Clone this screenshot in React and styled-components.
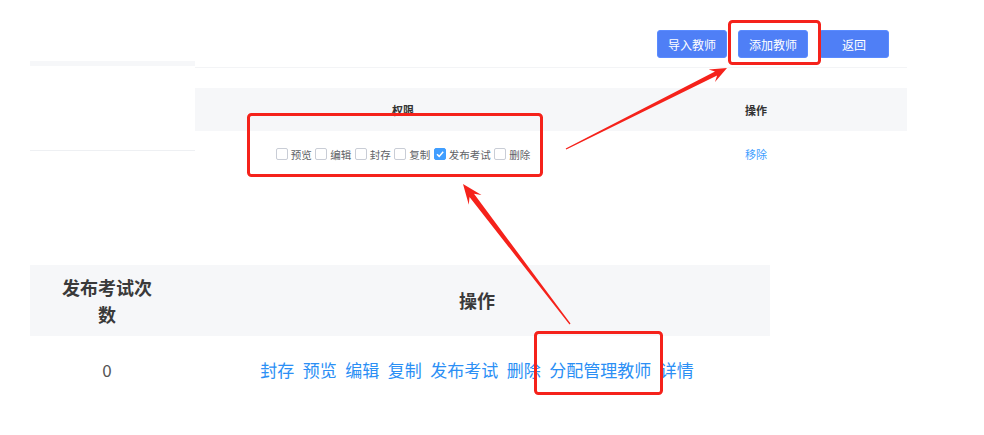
import React from "react";
import styled, { createGlobalStyle } from "styled-components";

const GlobalStyle = createGlobalStyle`
  body {
    margin: 0;
    background: #ffffff;
    font-family: "Noto Sans CJK SC", "Noto Sans", sans-serif;
  }
`;

const permissions = [
  { label: "预览", checked: false },
  { label: "编辑", checked: false },
  { label: "封存", checked: false },
  { label: "复制", checked: false },
  { label: "发布考试", checked: true },
  { label: "删除", checked: false },
];

const actions = ["封存", "预览", "编辑", "复制", "发布考试", "删除", "分配管理教师", "详情"];

function arrowPoints(x1, y1, x2, y2, head, headW, neckW, tailW) {
  const dx = x2 - x1;
  const dy = y2 - y1;
  const len = Math.sqrt(dx * dx + dy * dy);
  const ux = dx / len;
  const uy = dy / len;
  const nx = -uy;
  const ny = ux;
  const bx = x2 - ux * head;
  const by = y2 - uy * head;
  const kx = x2 - ux * head * 0.72;
  const ky = y2 - uy * head * 0.72;
  const pts = [
    [x1 + nx * tailW, y1 + ny * tailW],
    [kx + nx * neckW, ky + ny * neckW],
    [bx + nx * headW, by + ny * headW],
    [x2, y2],
    [bx - nx * headW, by - ny * headW],
    [kx - nx * neckW, ky - ny * neckW],
    [x1 - nx * tailW, y1 - ny * tailW],
  ];
  return pts.map((p) => p[0].toFixed(1) + "," + p[1].toFixed(1)).join(" ");
}

function CheckMark() {
  return (
    <svg width="10" height="10" viewBox="0 0 10 10">
      <path d="M2 5.2 L4.2 7.4 L8.2 2.8" fill="none" stroke="#fff" strokeWidth="1.5" />
    </svg>
  );
}

function App() {
  return (
    <Page>
      <GlobalStyle />
      <Toolbar>
        <Button>导入教师</Button>
        <Button>添加教师</Button>
        <Button>返回</Button>
      </Toolbar>

      <TopSection>
        <SidePane />
        <MainPane>
          <TopHeader>
            <span>权限</span>
            <span>操作</span>
          </TopHeader>
          <TopRow>
            <CheckGroup>
              {permissions.map((p) => (
                <CheckItem key={p.label}>
                  <Box $checked={p.checked}>{p.checked && <CheckMark />}</Box>
                  <span>{p.label}</span>
                </CheckItem>
              ))}
            </CheckGroup>
            <SmallLink>移除</SmallLink>
          </TopRow>
        </MainPane>
      </TopSection>

      <BottomTable>
        <BottomHeader>
          <HeadCell $narrow>发布考试次数</HeadCell>
          <HeadCell>操作</HeadCell>
        </BottomHeader>
        <BottomRow>
          <CountCell>0</CountCell>
          <LinkCell>
            {actions.map((a) => (
              <BigLink key={a}>{a}</BigLink>
            ))}
          </LinkCell>
        </BottomRow>
      </BottomTable>

      <Annotations width="984" height="435" viewBox="0 0 984 435">
        <rect x="729.5" y="21.5" width="90" height="42" rx="3" fill="none" stroke="#f5221b" strokeWidth="3" />
        <rect x="248.5" y="114.5" width="293" height="61" rx="3" fill="none" stroke="#f5221b" strokeWidth="3" />
        <rect x="535.5" y="332.5" width="126" height="61" rx="3" fill="none" stroke="#f5221b" strokeWidth="3" />
        <polygon points={arrowPoints(566, 149, 727, 68, 17, 7, 2.4, 0.6)} fill="#f5221b" />
        <polygon points={arrowPoints(570, 324, 463, 184, 20, 8, 2.8, 0.6)} fill="#f5221b" />
      </Annotations>
    </Page>
  );
}

const Page = styled.div`
  position: relative;
  width: 984px;
  height: 435px;
  overflow: hidden;
  background: #ffffff;
`;

const Toolbar = styled.div`
  display: flex;
  justify-content: flex-end;
  gap: 11px;
  padding: 30px 95px 3px 0;
`;

const Button = styled.button`
  width: 70px;
  height: 28px;
  border: 1px solid #5a8bff;
  border-radius: 3px;
  background: #4f7ff6;
  color: #ffffff;
  font-family: inherit;
  font-size: 12px;
  padding: 0;
`;

const TopSection = styled.div`
  display: flex;
  align-items: flex-start;
  margin-left: 30px;
`;

const SidePane = styled.div`
  width: 165px;
  height: 84px;
  border-top: 5px solid #f6f7f9;
  border-bottom: 1px solid #eef0f3;
`;

const MainPane = styled.div`
  width: 712px;
  margin-top: 6px;
  padding-top: 20px;
  border-top: 1px solid #f3f4f6;
`;

const TopHeader = styled.div`
  display: grid;
  grid-template-columns: 416px 290px;
  align-items: center;
  justify-items: center;
  height: 43px;
  padding-right: 6px;
  background: #f6f7f9;
  color: #333333;
  font-size: 11px;
  font-weight: 700;
`;

const TopRow = styled.div`
  display: grid;
  grid-template-columns: 416px 290px;
  align-items: center;
  justify-items: center;
  height: 46px;
`;

const CheckGroup = styled.div`
  display: flex;
  align-items: center;
  gap: 3.5px;
  font-size: 10.5px;
  color: #606266;
`;

const CheckItem = styled.label`
  display: flex;
  align-items: center;
  gap: 3px;
`;

const Box = styled.span`
  display: flex;
  align-items: center;
  justify-content: center;
  width: 12px;
  height: 12px;
  box-sizing: border-box;
  border-radius: 2px;
  border: 1px solid ${(p) => (p.$checked ? "#409eff" : "#c9cdd6")};
  background: ${(p) => (p.$checked ? "#409eff" : "#ffffff")};
`;

const SmallLink = styled.span`
  font-size: 11px;
  color: #409eff;
`;

const BottomTable = styled.div`
  width: 740px;
  margin: 88px 0 0 30px;
`;

const BottomHeader = styled.div`
  display: grid;
  grid-template-columns: 154px 586px;
  align-items: center;
  height: 71px;
  background: #f6f7f9;
`;

const HeadCell = styled.div`
  text-align: center;
  padding: ${(p) => (p.$narrow ? "0 30px" : "0")};
  font-size: 18px;
  line-height: 27px;
  font-weight: 700;
  color: #3a3a3a;
`;

const BottomRow = styled.div`
  display: grid;
  grid-template-columns: 154px 586px;
  align-items: center;
  height: 66px;
`;

const CountCell = styled.div`
  text-align: center;
  font-size: 17px;
  color: #555555;
`;

const LinkCell = styled.div`
  display: flex;
  justify-content: center;
  gap: 8.5px;
`;

const BigLink = styled.span`
  font-size: 17px;
  color: #2b8ff5;
`;

const Annotations = styled.svg`
  position: absolute;
  left: 0;
  top: 0;
  pointer-events: none;
`;

export default App;
